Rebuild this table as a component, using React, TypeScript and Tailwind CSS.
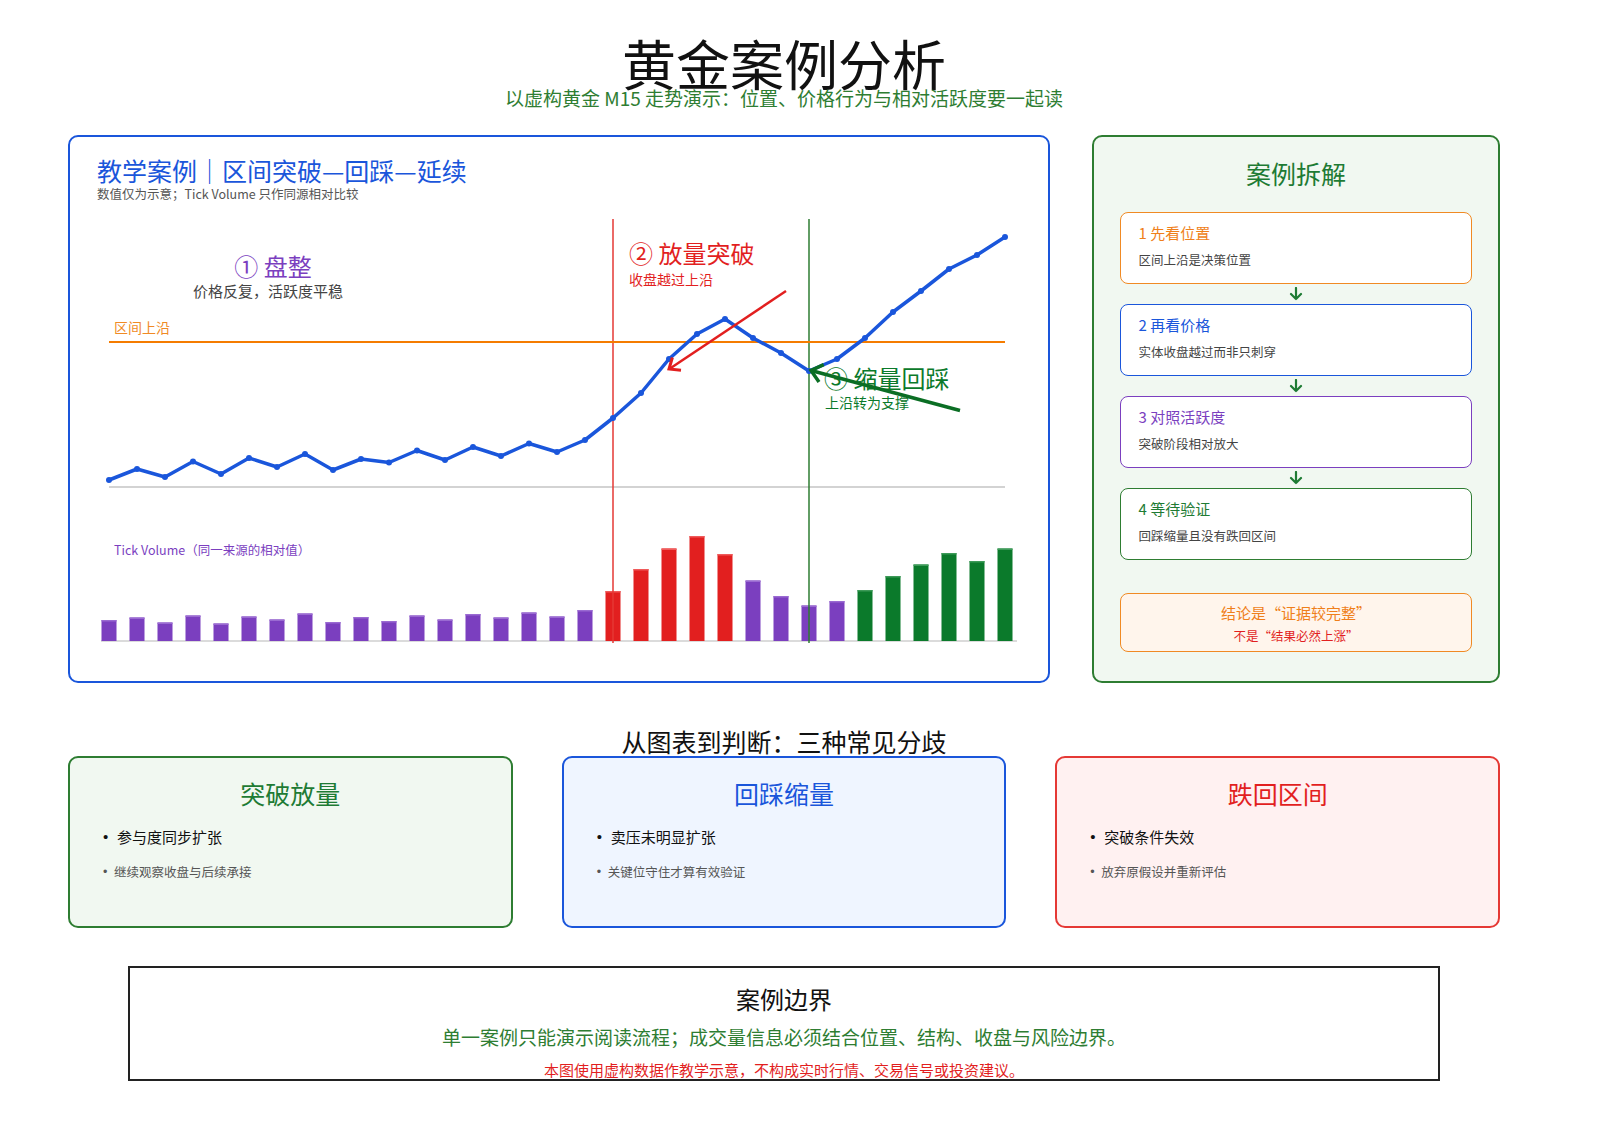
import React from "react";

const X = (i: number) => 109 + 28 * i;
const PY = [480, 469, 477, 461.5, 474, 458, 467, 454, 470, 459, 462.5, 450.5, 460, 447, 456, 443.5, 452, 440, 418, 393, 359, 334, 319, 338, 353, 371, 359, 338, 312, 291, 269, 255, 237];
const VH = [21, 23.5, 18.5, 25.5, 17.5, 24.5, 21.5, 27.5, 19, 24, 20, 25.5, 21.5, 27, 23.5, 28.5, 24.5, 31, 50, 72, 92.5, 105, 87, 60.5, 45, 35.5, 40, 51, 65, 76.5, 88, 80, 92.5];

const PURPLE = "#7b3fbf";
const RED = "#e21f1f";
const GREEN = "#0b7a2b";
const BLUE = "#1a56db";

function barColor(i: number) {
  if (i < 18) return [PURPLE, "#9a6ad2"];
  if (i < 23) return [RED, "#f05a5a"];
  if (i < 27) return [PURPLE, "#9a6ad2"];
  return [GREEN, "#3d9a58"];
}

function Chart() {
  const pts = PY.map((y, i) => `${X(i)},${y}`).join(" ");
  return (
    <svg className="block" width={978} height={471} viewBox="70 210 978 471">
      <line x1={109} y1={487} x2={1005} y2={487} stroke="#c4c4c4" strokeWidth={1.5} />
      <line x1={101} y1={641} x2={1017} y2={641} stroke="#cfcfcf" strokeWidth={1.5} />
      {VH.map((h, i) => {
        const [c, top] = barColor(i);
        return (
          <g key={i}>
            <rect x={X(i) - 7.5} y={641 - h} width={15} height={h} fill={c} />
            <rect x={X(i) - 7.5} y={641 - h} width={15} height={1.5} fill={top} />
          </g>
        );
      })}
      <line x1={613} y1={219} x2={613} y2={643} stroke="#e53935" strokeWidth={1.5} />
      <line x1={809} y1={219} x2={809} y2={643} stroke="#2e7d32" strokeWidth={1.5} />
      <line x1={109} y1={342} x2={1005} y2={342} stroke="#f57c00" strokeWidth={2} />
      <text x={114} y={333.3} fontSize={14} fill="#f08a24">区间上沿</text>
      <text x={273} y={276} fontSize={24} fill={PURPLE} textAnchor="middle">① 盘整</text>
      <text x={268} y={296.7} fontSize={15} fill="#444" textAnchor="middle">价格反复，活跃度平稳</text>
      <text x={629} y={263} fontSize={24} fill={RED}>② 放量突破</text>
      <text x={629} y={285.3} fontSize={14} fill={RED}>收盘越过上沿</text>
      <text x={824} y={388} fontSize={24} fill={GREEN}>③ 缩量回踩</text>
      <text x={825} y={408.3} fontSize={14} fill={GREEN}>上沿转为支撑</text>
      <text x={114} y={554.7} fontSize={12.5} fill={PURPLE}>Tick Volume（同一来源的相对值）</text>
      <polyline points={pts} fill="none" stroke={BLUE} strokeWidth={3.5} strokeLinejoin="round" strokeLinecap="round" />
      {PY.map((y, i) => (
        <circle key={i} cx={X(i)} cy={y} r={3} fill={BLUE} />
      ))}
      <line x1={786} y1={291} x2={670} y2={368.5} stroke={RED} strokeWidth={2.5} />
      <path d="M681,370.3 L669,369 L672.4,357.5" fill="none" stroke={RED} strokeWidth={3} />
      <line x1={960} y1={410.5} x2={812} y2={370.8} stroke="#0b6e24" strokeWidth={3.5} />
      <path d="M819,382 L811,370.5 L823.7,364.6" fill="none" stroke="#0b6e24" strokeWidth={3.5} />
    </svg>
  );
}

function DownArrow() {
  return (
    <div className="h-[20px] flex items-center justify-center">
      <svg width="14" height="14" viewBox="0 0 14 14">
        <path d="M7 1 V12 M2 7 L7 12 L12 7" fill="none" stroke="#1e7b34" strokeWidth={2.2} strokeLinecap="round" strokeLinejoin="round" />
      </svg>
    </div>
  );
}

function Step({ title, desc, border, color }: { title: string; desc: string; border: string; color: string }) {
  return (
    <div className={`h-[72px] rounded-[8px] bg-white border-[1.5px] pl-[17.5px] pt-[10px] ${border}`}>
      <div className={`text-[15px] leading-[20px] ${color}`}>{title}</div>
      <div className="mt-[9px] text-[12.5px] leading-[16px] text-[#444]">{desc}</div>
    </div>
  );
}

function Case({ title, a, b, cls, tcls }: { title: string; a: string; b: string; cls: string; tcls: string }) {
  return (
    <div className={`h-[172px] rounded-[10px] border-2 pt-[20px] pl-[33px] ${cls}`}>
      <div className={`text-center pr-[33px] text-[25px] leading-[30px] ${tcls}`}>{title}</div>
      <div className="mt-[19px] flex text-[15px] leading-[20px] text-[#111]">
        <span className="w-[14px] font-['Liberation_Sans',sans-serif]">•</span>
        <span>{a}</span>
      </div>
      <div className="mt-[16.5px] flex text-[12.5px] leading-[16px] text-[#555]">
        <span className="w-[11px] font-['Liberation_Sans',sans-serif]">•</span>
        <span>{b}</span>
      </div>
    </div>
  );
}

export default function App() {
  return (
    <div className="w-[1600px] h-[1131px] bg-white overflow-hidden font-['Noto_Sans_CJK_SC',sans-serif]">
      <div className="w-[1432px] ml-[68px]">
        <h1 className="pt-[36px] text-center text-[54px] leading-[54px] font-normal text-[#111]">黄金案例分析</h1>
        <p className="mt-[-2px] text-center text-[19px] leading-[20px] text-[#2e7d32]">以虚构黄金 M15 走势演示：位置、价格行为与相对活跃度要一起读</p>

        <div className="mt-[27px] flex gap-[42px] h-[548px]">
          <div className="w-[982px] h-[548px] rounded-[10px] border-2 border-[#1a56db] bg-white flex flex-col overflow-hidden">
            <div className="h-[73px] pl-[27px] pt-[19px]">
              <div className="text-[25px] leading-[29px] text-[#1a56db]">教学案例｜区间突破—回踩—延续</div>
              <div className="mt-[1px] text-[12.5px] leading-[16px] text-[#555]">数值仅为示意；Tick Volume 只作同源相对比较</div>
            </div>
            <Chart />
          </div>

          <div className="w-[408px] h-[548px] rounded-[10px] border-2 border-[#2e7d32] bg-[#f1f8f1] px-[26px]">
            <div className="pt-[22px] text-center text-[25px] leading-[28px] text-[#1e7b34]">案例拆解</div>
            <div className="mt-[25px]">
              <Step title="1 先看位置" desc="区间上沿是决策位置" border="border-[#f08a24]" color="text-[#ef7f1a]" />
              <DownArrow />
              <Step title="2 再看价格" desc="实体收盘越过而非只刺穿" border="border-[#1a56db]" color="text-[#1a56db]" />
              <DownArrow />
              <Step title="3 对照活跃度" desc="突破阶段相对放大" border="border-[#7b3fbf]" color="text-[#7b3fbf]" />
              <DownArrow />
              <Step title="4 等待验证" desc="回踩缩量且没有跌回区间" border="border-[#2e7d32]" color="text-[#1e7b34]" />
            </div>
            <div className="mt-[33px] h-[59px] rounded-[8px] border-[1.5px] border-[#f08a24] bg-[#fff5ec] pt-[9px] text-center">
              <div className="text-[15px] leading-[20px] text-[#ef7f1a]">结论是“证据较完整”</div>
              <div className="mt-[5px] text-[12.5px] leading-[16px] text-[#e21f1f]">不是“结果必然上涨”</div>
            </div>
          </div>
        </div>

        <div className="mt-[45px] text-center text-[25px] leading-[26px] text-[#111]">从图表到判断：三种常见分歧</div>

        <div className="mt-[2px] grid grid-cols-3 gap-[49px]">
          <Case title="突破放量" a="参与度同步扩张" b="继续观察收盘与后续承接" cls="border-[#2e7d32] bg-[#f1f8f1]" tcls="text-[#1e7b34]" />
          <Case title="回踩缩量" a="卖压未明显扩张" b="关键位守住才算有效验证" cls="border-[#1a56db] bg-[#eff5ff]" tcls="text-[#1a56db]" />
          <Case title="跌回区间" a="突破条件失效" b="放弃原假设并重新评估" cls="border-[#e53935] bg-[#fff1f1]" tcls="text-[#e21f1f]" />
        </div>

        <div className="mt-[38px] mx-[60px] h-[115px] border-2 border-[#222] pt-[17px] text-center">
          <div className="text-[24px] leading-[28px] text-[#111]">案例边界</div>
          <div className="mt-[12px] text-[19px] leading-[24px] text-[#2e7d32]">单一案例只能演示阅读流程；成交量信息必须结合位置、结构、收盘与风险边界。</div>
          <div className="mt-[12px] text-[15px] leading-[18px] text-[#e21f1f]">本图使用虚构数据作教学示意，不构成实时行情、交易信号或投资建议。</div>
        </div>
      </div>
    </div>
  );
}
